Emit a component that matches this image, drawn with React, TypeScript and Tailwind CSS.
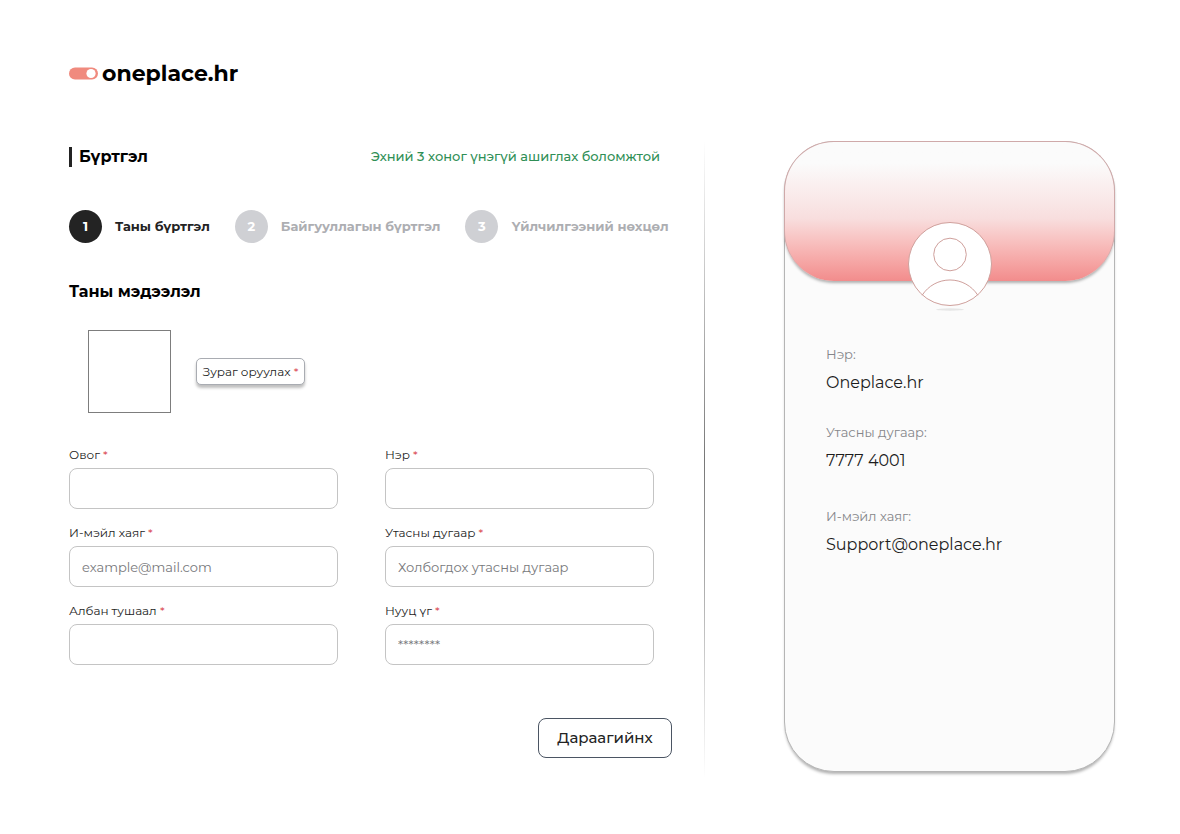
import { useState } from 'react';
import type { FormEvent } from 'react';

interface IStep {
  id: number;
  title: string;
}

interface IField {
  name: string;
  label: string;
  type: string;
  placeholder?: string;
}

const STEPS: IStep[] = [
  { id: 1, title: 'Таны бүртгэл' },
  { id: 2, title: 'Байгууллагын бүртгэл' },
  { id: 3, title: 'Үйлчилгээний нөхцөл' },
];

const FIELDS: IField[] = [
  { name: 'lastName', label: 'Овог', type: 'text' },
  { name: 'firstName', label: 'Нэр', type: 'text' },
  { name: 'email', label: 'И-мэйл хаяг', type: 'email', placeholder: 'example@mail.com' },
  { name: 'phone', label: 'Утасны дугаар', type: 'tel', placeholder: 'Холбогдох утасны дугаар' },
  { name: 'position', label: 'Албан тушаал', type: 'text' },
  { name: 'password', label: 'Нууц үг', type: 'password', placeholder: '********' },
];

const Required = () => <span className="text-[#d9434e]">*</span>;

const Logo = () => (
  <a href="/" className="flex h-8 items-center gap-[3px] text-black">
    <svg width="30" height="14" viewBox="0 0 30 14" aria-hidden="true">
      <rect x="0" y="1.5" width="29" height="12" rx="6" fill="#f08a7e" />
      <circle cx="22" cy="7.5" r="4.6" fill="#fff" />
    </svg>
    <span className="text-[22px] font-bold">oneplace.hr</span>
  </a>
);

const Stepper = ({ current }: { current: number }) => (
  <ol className="mt-[37px] flex items-center gap-[25px]">
    {STEPS.map((step) => {
      const active = step.id === current;
      return (
        <li key={step.id} className="flex items-center gap-[13px] text-[13px] font-bold whitespace-nowrap">
          <span
            className={`flex size-[33px] items-center justify-center rounded-full text-white ${
              active ? 'bg-[#232323]' : 'bg-[#cfd0d4]'
            }`}
          >
            {step.id}
          </span>
          <span className={active ? 'text-[#232323]' : 'text-[#adaeb2]'}>{step.title}</span>
        </li>
      );
    })}
  </ol>
);

const Avatar = () => (
  <svg width="84" height="90" viewBox="0 0 84 90" fill="none" stroke="#cfa09c" aria-hidden="true">
    <ellipse cx="42" cy="87.5" rx="14" ry="1.2" fill="#e6e6e6" stroke="none" />
    <circle cx="42" cy="42" r="41.5" fill="#fff" />
    <circle cx="42" cy="32.5" r="16.3" />
    <path d="M14.2 73.2a33 33 0 0 1 55.6 0" />
  </svg>
);

const ProfileItem = ({ label, value }: { label: string; value: string }) => (
  <div className="flex flex-col gap-[9px]">
    <dt className="text-[13px] leading-5 text-[#85868a]">{label}</dt>
    <dd className="text-base leading-5 text-[#1d1d1d]">{value}</dd>
  </div>
);

const ProfileCard = () => (
  <aside className="min-h-[631px] w-[331px] shrink-0 self-start rounded-[50px] border border-[#b5b5b5] bg-[#fbfbfb] shadow-[0_3px_3px_-1px_rgba(0,0,0,0.3)]">
    <div className="-mx-px -mt-px h-[140px] rounded-[50px] border border-b-0 border-[#cfa9a9] bg-linear-to-b from-[#fbfbfb] from-15% via-[#f8dede] via-55% to-[#f28c8c] shadow-[0_3px_3px_-1px_rgba(0,0,0,0.3)]" />
    <div className="-mt-[59px] flex justify-center">
      <Avatar />
    </div>
    <dl className="mt-8 flex flex-col gap-[29px] px-[41px]">
      <ProfileItem label="Нэр:" value="Oneplace.hr" />
      <ProfileItem label="Утасны дугаар:" value="7777 4001" />
      <div className="pt-1.5">
        <ProfileItem label="И-мэйл хаяг:" value="Support@oneplace.hr" />
      </div>
    </dl>
  </aside>
);

export default function App() {
  const [values, setValues] = useState<Record<string, string>>({});

  const handleSubmit = (e: FormEvent) => {
    e.preventDefault();
  };

  return (
    <div className="min-h-screen bg-white pt-[57px] pr-[65px] pb-14 pl-[69px] font-['Montserrat','Inter','Noto_Sans',sans-serif] text-[#232323]">
      <header className="flex">
        <Logo />
      </header>

      <div className="mt-[52px] flex">
        <main className="min-w-0 flex-1">
          <div className="flex h-8 items-center justify-between pr-3">
            <div className="flex items-center gap-[7px]">
              <span className="h-5 w-[3px] bg-[#232323]" />
              <h1 className="text-base font-bold text-black">Бүртгэл</h1>
            </div>
            <p className="text-[13px] font-medium text-[#2f8f56]">Эхний 3 хоног үнэгүй ашиглах боломжтой</p>
          </div>

          <Stepper current={1} />

          <form onSubmit={handleSubmit}>
            <h2 className="mt-[37px] text-base leading-6 font-bold text-black">Таны мэдээлэл</h2>

            <div className="mt-[26px] flex items-center gap-[25px] pl-[19px]">
              <div className="size-[83px] border border-[#7d7d7d]" />
              <button
                type="button"
                className="h-[27px] w-[109px] rounded-[5px] border border-[#a9acb2] bg-white text-xs whitespace-nowrap shadow-[0_3px_3px_rgba(0,0,0,0.25)]"
              >
                Зураг оруулах <Required />
              </button>
            </div>

            <div className="mt-[34px] grid grid-cols-2 gap-x-[47px] gap-y-4 pr-[18px]">
              {FIELDS.map((field) => (
                <div key={field.name} className="flex flex-col gap-[5px]">
                  <label htmlFor={field.name} className="text-xs leading-4">
                    {field.label} <Required />
                  </label>
                  <input
                    id={field.name}
                    type={field.type}
                    placeholder={field.placeholder}
                    value={values[field.name] ?? ''}
                    onChange={(e) => setValues({ ...values, [field.name]: e.target.value })}
                    className="h-[41px] w-full rounded-lg border border-[#c4c4c4] bg-white px-3 text-[13px] outline-none placeholder:text-[#77787b] focus:border-[#232323]"
                  />
                </div>
              ))}
            </div>

            <div className="mt-[53px] flex justify-end">
              <button
                type="submit"
                className="h-10 w-[134px] rounded-lg border border-[#4b5563] bg-white text-[15px] font-medium"
              >
                Дараагийнх
              </button>
            </div>
          </form>
        </main>

        <div className="mr-[79px] ml-8 h-[637px] w-px shrink-0 bg-linear-to-b from-transparent via-[#777] to-transparent" />

        <ProfileCard />
      </div>
    </div>
  );
}
